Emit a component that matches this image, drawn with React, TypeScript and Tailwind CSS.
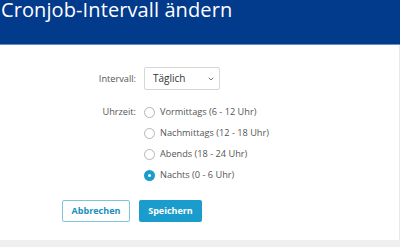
import { ChevronDown } from 'lucide-react';

const options = [
  'Vormittags (6 - 12 Uhr)',
  'Nachmittags (12 - 18 Uhr)',
  'Abends (18 - 24 Uhr)',
  'Nachts (0 - 6 Uhr)',
];

export default function App() {
  const selected = 3;

  return (
    <div className="w-[400px] h-[247px] bg-white flex flex-col overflow-hidden font-['Open_Sans',sans-serif]">
      {/* Kopfzeile */}
      <div className="h-[45px] shrink-0 bg-[#023a8c] border-b border-[#6b8cc4]">
        <h1 className="text-white text-[20px] leading-[20px] pl-[1px] tracking-[0.1px]">
          Cronjob-Intervall ändern
        </h1>
      </div>

      <div className="flex-1 flex flex-col border-r border-[#e8e8e8]">
        <div className="grid grid-cols-[136px_1fr] gap-x-[8px] pt-[22px] text-[9.2px] text-[#555]">
          <label className="text-right self-center">Intervall:</label>
          <div className="w-[76px] h-[23px] border border-[#d6d6d6] rounded-[2px] flex items-center justify-between pl-[8px] pr-[4px] text-[10px] text-[#333]">
            <span>Täglich</span>
            <ChevronDown size={8} strokeWidth={2.5} className="text-[#555]" />
          </div>

          <label className="text-right pt-[16px] leading-[12px]">Uhrzeit:</label>
          <div className="flex flex-col gap-[9px] pt-[16px]">
            {options.map((opt, i) => (
              <div key={opt} className="flex items-center gap-[5px] h-[12px]">
                {i === selected ? (
                  <span className="w-[11px] h-[11px] rounded-full bg-[#1a9ccc] flex items-center justify-center">
                    <span className="w-[3px] h-[3px] rounded-full bg-white" />
                  </span>
                ) : (
                  <span className="w-[11px] h-[11px] rounded-full border border-[#b5b5b5] bg-white" />
                )}
                <span>{opt}</span>
              </div>
            ))}
          </div>
        </div>

        {/* Aktionen */}
        <div className="flex gap-[9px] pl-[62px] pt-[19px]">
          <button className="w-[68px] h-[22px] border border-[#7ec6e0] rounded-[2px] text-[#1a8fbd] text-[9px] font-bold">
            Abbrechen
          </button>
          <button className="w-[63px] h-[22px] bg-[#1a9ccc] rounded-[2px] text-white text-[9px] font-bold">
            Speichern
          </button>
        </div>
      </div>

      <div className="h-[7px] shrink-0 bg-[#efefef]" />
    </div>
  );
}
